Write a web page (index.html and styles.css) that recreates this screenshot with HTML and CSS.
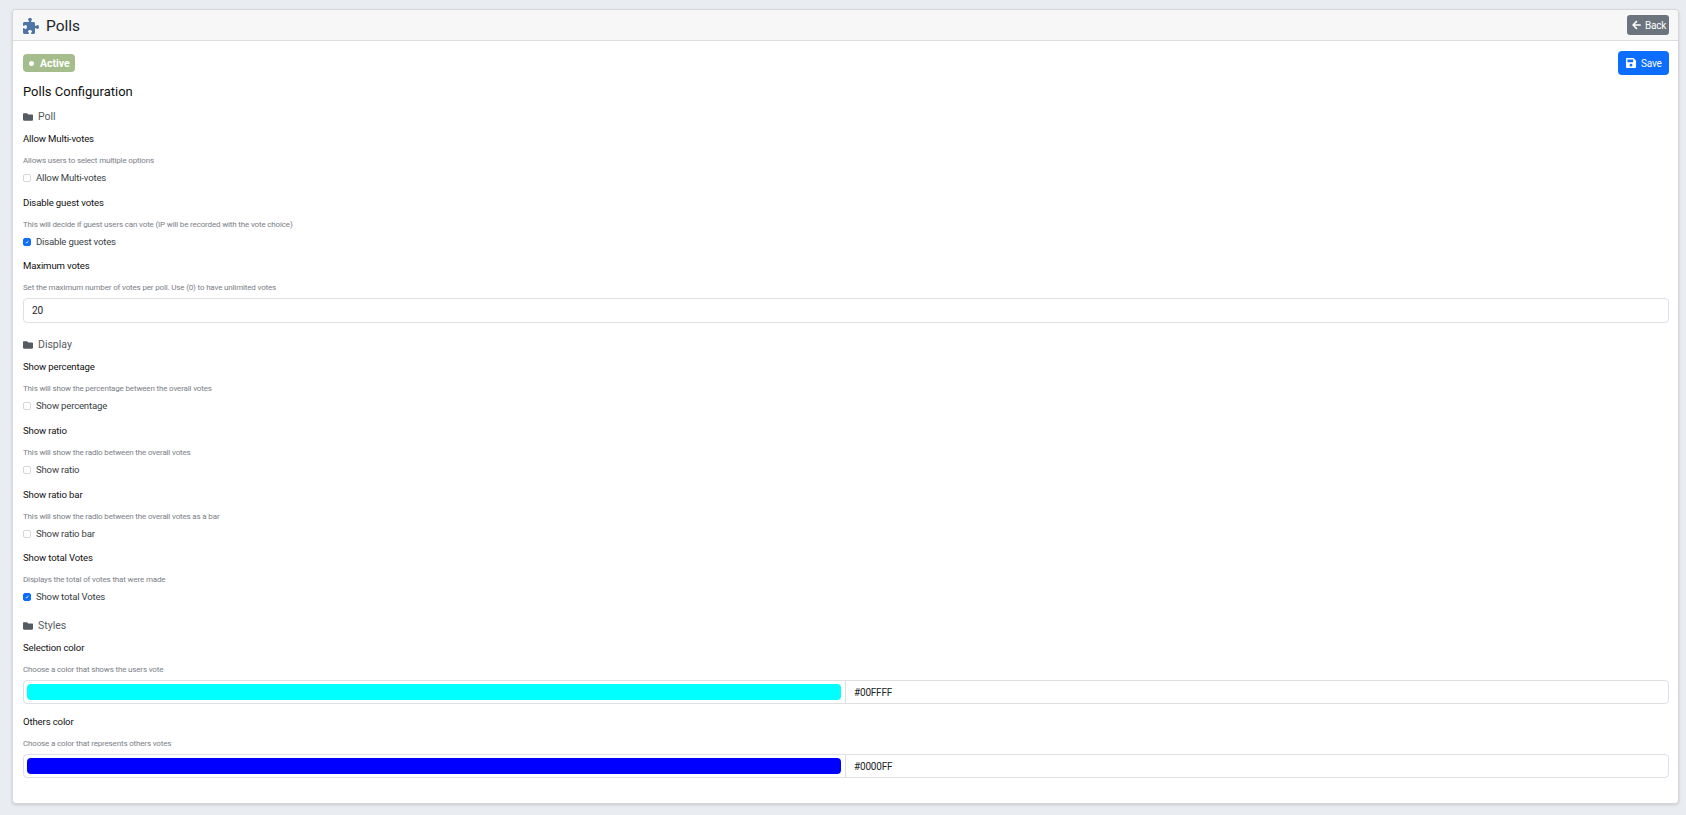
FILE: index.html
```html
<!DOCTYPE html>
<html lang="en">
<head>
  <meta charset="UTF-8" />
  <title>Polls</title>
  <link rel="stylesheet" href="styles.css">
</head>
<body>
  <div class="card">
    <header class="card-header">
      <div class="title">
        <svg class="icon-puzzle" viewBox="0 0 512 512"><path d="M192 104.8c0-9.2-5.8-17.3-13.2-22.8C167.2 73.3 160 61.3 160 48c0-26.5 28.7-48 64-48s64 21.5 64 48c0 13.3-7.2 25.3-18.8 34c-7.4 5.5-13.2 13.6-13.2 22.8v0c0 12.8 10.4 23.2 23.2 23.2H336c26.5 0 48 21.5 48 48v56.8c0 12.8 10.4 23.2 23.2 23.2v0c9.2 0 17.3-5.8 22.8-13.2c8.7-11.6 20.7-18.8 34-18.8c26.5 0 48 28.7 48 64s-21.5 64-48 64c-13.3 0-25.3-7.2-34-18.8c-5.5-7.4-13.6-13.2-22.8-13.2v0c-12.8 0-23.2 10.4-23.2 23.2V464c0 26.5-21.5 48-48 48H279.2c-12.8 0-23.2-10.4-23.2-23.2v0c0-9.2 5.8-17.3 13.2-22.8c11.6-8.7 18.8-20.7 18.8-34c0-26.5-28.7-48-64-48s-64 21.5-64 48c0 13.3 7.2 25.3 18.8 34c7.4 5.5 13.2 13.6 13.2 22.8v0c0 12.8-10.4 23.2-23.2 23.2H48c-26.5 0-48-21.5-48-48V343.2C0 330.4 10.4 320 23.2 320v0c9.2 0 17.3 5.8 22.8 13.2C54.7 344.8 66.7 352 80 352c26.5 0 48-28.7 48-64s-21.5-64-48-64c-13.3 0-25.3 7.2-34 18.8C40.5 250.2 32.4 256 23.2 256v0C10.4 256 0 245.6 0 232.8V176c0-26.5 21.5-48 48-48H168.8c12.8 0 23.2-10.4 23.2-23.2v0z"/></svg>
        <h1>Polls</h1>
      </div>
      <a class="btn btn-back" href="#">
        <svg class="icon-btn" viewBox="0 0 448 512"><path d="M257.5 445.1l-22.2 22.2c-9.4 9.4-24.6 9.4-33.9 0L7 273c-9.4-9.4-9.4-24.6 0-33.9L201.4 44.7c9.4-9.4 24.6-9.4 33.9 0l22.2 22.2c9.5 9.5 9.3 25-.4 34.3L136.6 216H424c13.3 0 24 10.7 24 24v32c0 13.3-10.7 24-24 24H136.6l120.5 114.8c9.8 9.3 10 24.8.4 34.3z"/></svg>
        Back
      </a>
    </header>

    <main class="card-body">
      <div class="top-row">
        <span class="badge"><i class="dot"></i>Active</span>
        <a class="btn btn-save" href="#">
          <svg class="icon-save" viewBox="0 32 448 448"><path d="M433.941 129.941l-83.882-83.882A48 48 0 0 0 316.118 32H48C21.49 32 0 53.49 0 80v352c0 26.51 21.49 48 48 48h352c26.51 0 48-21.49 48-48V163.882a48 48 0 0 0-14.059-33.941zM224 416c-35.346 0-64-28.654-64-64 0-35.346 28.654-64 64-64s64 28.654 64 64c0 35.346-28.654 64-64 64zm96-304.52V212c0 6.627-5.373 12-12 12H76c-6.627 0-12-5.373-12-12V108c0-6.627 5.373-12 12-12h228.52c3.183 0 6.235 1.264 8.485 3.515l3.48 3.48A11.996 11.996 0 0 1 320 111.48z"/></svg>
          Save
        </a>
      </div>

      <h2>Polls Configuration</h2>

      <h3 class="section"><svg class="icon-folder" viewBox="0 64 512 384"><path d="M464 128H272l-64-64H48C21.49 64 0 85.49 0 112v288c0 26.51 21.49 48 48 48h416c26.51 0 48-21.49 48-48V176c0-26.51-21.49-48-48-48z"/></svg>Poll</h3>

      <div class="field">
        <label class="label">Allow Multi-votes</label>
        <p class="help">Allows users to select multiple options</p>
        <label class="check"><input type="checkbox"><span>Allow Multi-votes</span></label>
      </div>
      <div class="field">
        <label class="label">Disable guest votes</label>
        <p class="help">This will decide if guest users can vote (IP will be recorded with the vote choice)</p>
        <label class="check"><input type="checkbox" checked><span>Disable guest votes</span></label>
      </div>
      <div class="field">
        <label class="label">Maximum votes</label>
        <p class="help">Set the maximum number of votes per poll. Use (0) to have unlimited votes</p>
        <input class="text-input" type="text" value="20">
      </div>

      <h3 class="section"><svg class="icon-folder" viewBox="0 64 512 384"><path d="M464 128H272l-64-64H48C21.49 64 0 85.49 0 112v288c0 26.51 21.49 48 48 48h416c26.51 0 48-21.49 48-48V176c0-26.51-21.49-48-48-48z"/></svg>Display</h3>

      <div class="field">
        <label class="label">Show percentage</label>
        <p class="help">This will show the percentage between the overall votes</p>
        <label class="check"><input type="checkbox"><span>Show percentage</span></label>
      </div>
      <div class="field">
        <label class="label">Show ratio</label>
        <p class="help">This will show the radio between the overall votes</p>
        <label class="check"><input type="checkbox"><span>Show ratio</span></label>
      </div>
      <div class="field">
        <label class="label">Show ratio bar</label>
        <p class="help">This will show the radio between the overall votes as a bar</p>
        <label class="check"><input type="checkbox"><span>Show ratio bar</span></label>
      </div>
      <div class="field">
        <label class="label">Show total Votes</label>
        <p class="help">Displays the total of votes that were made</p>
        <label class="check"><input type="checkbox" checked><span>Show total Votes</span></label>
      </div>

      <h3 class="section"><svg class="icon-folder" viewBox="0 64 512 384"><path d="M464 128H272l-64-64H48C21.49 64 0 85.49 0 112v288c0 26.51 21.49 48 48 48h416c26.51 0 48-21.49 48-48V176c0-26.51-21.49-48-48-48z"/></svg>Styles</h3>

      <div class="field">
        <label class="label">Selection color</label>
        <p class="help">Choose a color that shows the users vote</p>
        <div class="color-group">
          <div class="swatch-box"><div class="swatch swatch-cyan"></div></div>
          <div class="color-value">#00FFFF</div>
        </div>
      </div>
      <div class="field">
        <label class="label">Others color</label>
        <p class="help">Choose a color that represents others votes</p>
        <div class="color-group">
          <div class="swatch-box"><div class="swatch swatch-blue"></div></div>
          <div class="color-value">#0000FF</div>
        </div>
      </div>
    </main>
  </div>
</body>
</html>
```

FILE: styles.css
```css
* { box-sizing: border-box; margin: 0; padding: 0; }
html, body { height: 100%; }
body {
  font-family: Roboto, 'Noto Sans', sans-serif;
  background: #e9ecf1;
  color: #212529;
  padding: 9px 7px 12px 12px;
  overflow: hidden;
}
.card {
  background: #fff;
  border: 1px solid #d5d7db;
  border-radius: 4px;
  box-shadow: 0 1px 3px rgba(0, 0, 0, 0.15);
  height: 795px;
}
.card-header {
  display: flex;
  align-items: center;
  justify-content: space-between;
  height: 31px;
  padding: 0 9px 0 10px;
  background: #f7f7f8;
  border-bottom: 1px solid #dcdde0;
  border-radius: 4px 4px 0 0;
}
.title { display: flex; align-items: center; gap: 7px; padding-top: 1px; }
.icon-puzzle { width: 16px; height: 16px; fill: #4f74a6; }
h1 { font-size: 15.5px; font-weight: 400; line-height: 20px; }
.btn {
  display: inline-flex;
  align-items: center;
  color: #fff;
  text-decoration: none;
  border-radius: 3px;
  font-size: 10px;
  letter-spacing: -0.02em;
}
.btn-back { height: 20px; width: 42px; padding-left: 5px; gap: 4px; background: #6c757d; }
.icon-btn { width: 9px; height: 10px; fill: #fff; }
.card-body { padding: 10px 9px 0 10px; }
.top-row { display: flex; justify-content: space-between; align-items: flex-start; height: 24px; }
.badge {
  display: inline-flex;
  align-items: center;
  height: 18px;
  width: 52px;
  margin-top: 3px;
  padding-left: 6px;
  padding-top: 1px;
  background: #a5bd8c;
  color: #fff;
  border-radius: 4px;
  font-size: 10.5px;
  font-weight: 700;
}
.dot { width: 5px; height: 5px; border-radius: 50%; background: #fff; margin-right: 6px; }
.btn-save { height: 24px; width: 51px; padding-left: 8px; gap: 5px; background: #0d6efd; border-radius: 4px; }
.icon-save { width: 10px; height: 10px; fill: #fff; }
h2 { font-size: 13px; font-weight: 400; line-height: 18px; margin-top: 8px; color: #111; }
.section {
  display: flex;
  align-items: center;
  gap: 5px;
  font-size: 10.5px;
  font-weight: 400;
  color: #555b62;
  line-height: 14px;
  margin-top: 15px;
  margin-bottom: 8px;
}
h2 + .section { margin-top: 9px; }
.icon-folder { width: 10px; height: 8px; fill: #555b62; }
.field { margin-bottom: 10.7px; }
.label { display: block; font-size: 9.6px; font-weight: 400; line-height: 14px; letter-spacing: -0.015em; color: #111; }
.help { font-size: 8px; color: #7b8087; line-height: 11px; margin-top: 9px; letter-spacing: -0.02em; }
.check { display: flex; align-items: center; gap: 5px; font-size: 9.6px; color: #3a3f45; line-height: 14px; margin-top: 5px; letter-spacing: -0.02em; }
.check input {
  appearance: none;
  flex: none;
  width: 8px;
  height: 8px;
  border: 1px solid #d5d7db;
  border-radius: 2px;
  background: #fff;
}
.check input:checked {
  background: #0d6efd url("data:image/svg+xml,%3Csvg xmlns='http://www.w3.org/2000/svg' viewBox='0 0 20 20'%3E%3Cpath fill='none' stroke='%23fff' stroke-width='3' d='M6 10l3 3 6-6'/%3E%3C/svg%3E") center / 100% no-repeat;
  border-color: #0d6efd;
}
.text-input {
  display: block;
  width: 100%;
  height: 25px;
  margin-top: 5px;
  padding: 0 8px;
  border: 1px solid #dee0e4;
  border-radius: 4px;
  font: 10px Roboto, sans-serif;
  color: #212529;
}
.color-group {
  display: flex;
  height: 24px;
  margin-top: 5px;
  border: 1px solid #dee0e4;
  border-radius: 4px;
}
.swatch-box { flex: 0 0 50%; padding: 3px 4px 3px 3px; border-right: 1px solid #dee0e4; }
.swatch { height: 100%; border-radius: 4px; }
.swatch-cyan { background: #00ffff; }
.swatch-blue { background: #0000ff; }
.color-value { flex: 1; display: flex; align-items: center; padding-left: 8px; font-size: 10px; letter-spacing: -0.02em; }
```
